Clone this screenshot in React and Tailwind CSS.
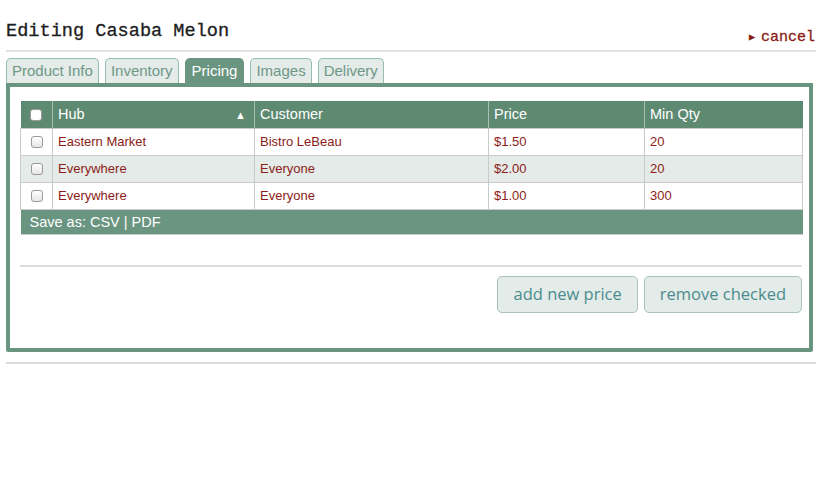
const rows = [
  { hub: "Eastern Market", customer: "Bistro LeBeau", price: "$1.50", qty: "20" },
  { hub: "Everywhere", customer: "Everyone", price: "$2.00", qty: "20" },
  { hub: "Everywhere", customer: "Everyone", price: "$1.00", qty: "300" },
];

const tabs = ["Product Info", "Inventory", "Pricing", "Images", "Delivery"];

function Box({ light }) {
  return (
    <span
      className={`inline-block w-[12px] h-[12px] rounded-[3px] border border-[#9a9a9a] align-middle ${
        light ? "bg-white" : "bg-gradient-to-b from-white to-[#e6e6e6]"
      }`}
    />
  );
}

export default function App() {
  return (
    <div className="w-[824px] h-[493px] bg-white px-[6px] pr-[8px] font-['Liberation_Sans',Arial,sans-serif]">
      <div className="flex items-end justify-between pt-[20px] pb-[6px] border-b-2 border-[#e2e4e3]">
        <h1 className="text-[18.6px] leading-[24px] text-[#1d1d1d] font-['Liberation_Mono',monospace] [-webkit-text-stroke:0.3px_#1d1d1d]">
          Editing Casaba Melon
        </h1>
        <a className="text-[15px] leading-[16px] text-[#8b1c17] font-['Liberation_Mono',monospace] [-webkit-text-stroke:0.3px_#8b1c17] mb-[-2px] mr-[1px]">
          <span className="text-[10px] mr-[6px] align-[1px]">▶</span>cancel
        </a>
      </div>

      <div className="flex gap-[6px] mt-[6px] h-[25px] items-end">
        {tabs.map((t) =>
          t === "Pricing" ? (
            <div
              key={t}
              className="h-[25px] px-[6px] pt-[3px] text-[15px] leading-[18px] text-white bg-[#6a9581] border border-b-0 border-[#6a9581] rounded-t-[5px]"
            >
              {t}
            </div>
          ) : (
            <div
              key={t}
              className="h-[25px] px-[5px] pt-[3px] text-[15px] leading-[18px] text-[#6e9886] bg-[#e4ebe8] border border-b-0 border-[#94bdb3] rounded-t-[5px]"
            >
              {t}
            </div>
          )
        )}
      </div>

      <div className="mr-[3px] border-[4px] border-[#6a9581] rounded-b-[2px] pt-[14px] pl-[10px] pr-[7px] pb-[35px]">
        <table className="w-[782px] table-fixed border-collapse text-[13px]">
          <colgroup>
            <col className="w-[32px]" />
            <col className="w-[202px]" />
            <col className="w-[234px]" />
            <col className="w-[156px]" />
            <col className="w-[158px]" />
          </colgroup>
          <thead>
            <tr className="h-[27px] bg-[#5e8a72] text-white text-[14.5px] text-left">
              <th className="font-normal text-center border-r border-[#a9c1b5]">
                <Box light />
              </th>
              <th className="font-normal px-[5px] pt-[2px] border-r border-[#a9c1b5]">
                <div className="flex justify-between items-center">
                  <span>Hub</span>
                  <span className="text-[11px] mr-[3px]">▲</span>
                </div>
              </th>
              <th className="font-normal px-[5px] pt-[2px] border-r border-[#a9c1b5]">Customer</th>
              <th className="font-normal px-[5px] pt-[2px] border-r border-[#a9c1b5]">Price</th>
              <th className="font-normal px-[5px] pt-[2px]">Min Qty</th>
            </tr>
          </thead>
          <tbody className="text-[#8b1c17]">
            {rows.map((r, i) => (
              <tr
                key={i}
                className={`h-[27px] ${i === 1 ? "bg-[#e4ebe8]" : "bg-white"}`}
              >
                <td className="text-center border border-[#cacaca]">
                  <Box />
                </td>
                <td className="px-[5px] pt-[1px] border border-[#cacaca]">{r.hub}</td>
                <td className="px-[5px] pt-[1px] border border-[#cacaca]">{r.customer}</td>
                <td className="px-[5px] pt-[1px] border border-[#cacaca]">{r.price}</td>
                <td className="px-[5px] pt-[1px] border border-[#cacaca]">{r.qty}</td>
              </tr>
            ))}
          </tbody>
          <tfoot>
            <tr className="h-[25px] bg-[#6a9581] text-white text-[14.5px]">
              <td colSpan={5} className="px-[9px] pt-[2px] border-b border-[#cacaca]">
                Save as: CSV | PDF
              </td>
            </tr>
          </tfoot>
        </table>

        <div className="mt-[30px] border-t-2 border-[#dcdcdc]" />

        <div className="flex justify-end gap-[6px] mt-[9px] font-['Open_Sans',sans-serif] text-[16.5px] text-[#4b8b8c]">
          <button className="h-[37px] px-[15px] bg-[#e4ecea] border border-[#a9c2ba] rounded-[5px]">
            add new price
          </button>
          <button className="h-[37px] px-[15px] bg-[#e4ecea] border border-[#a9c2ba] rounded-[5px]">
            remove checked
          </button>
        </div>
      </div>

      <div className="mt-[10px] border-t-2 border-[#dcdcdc]" />
    </div>
  );
}
